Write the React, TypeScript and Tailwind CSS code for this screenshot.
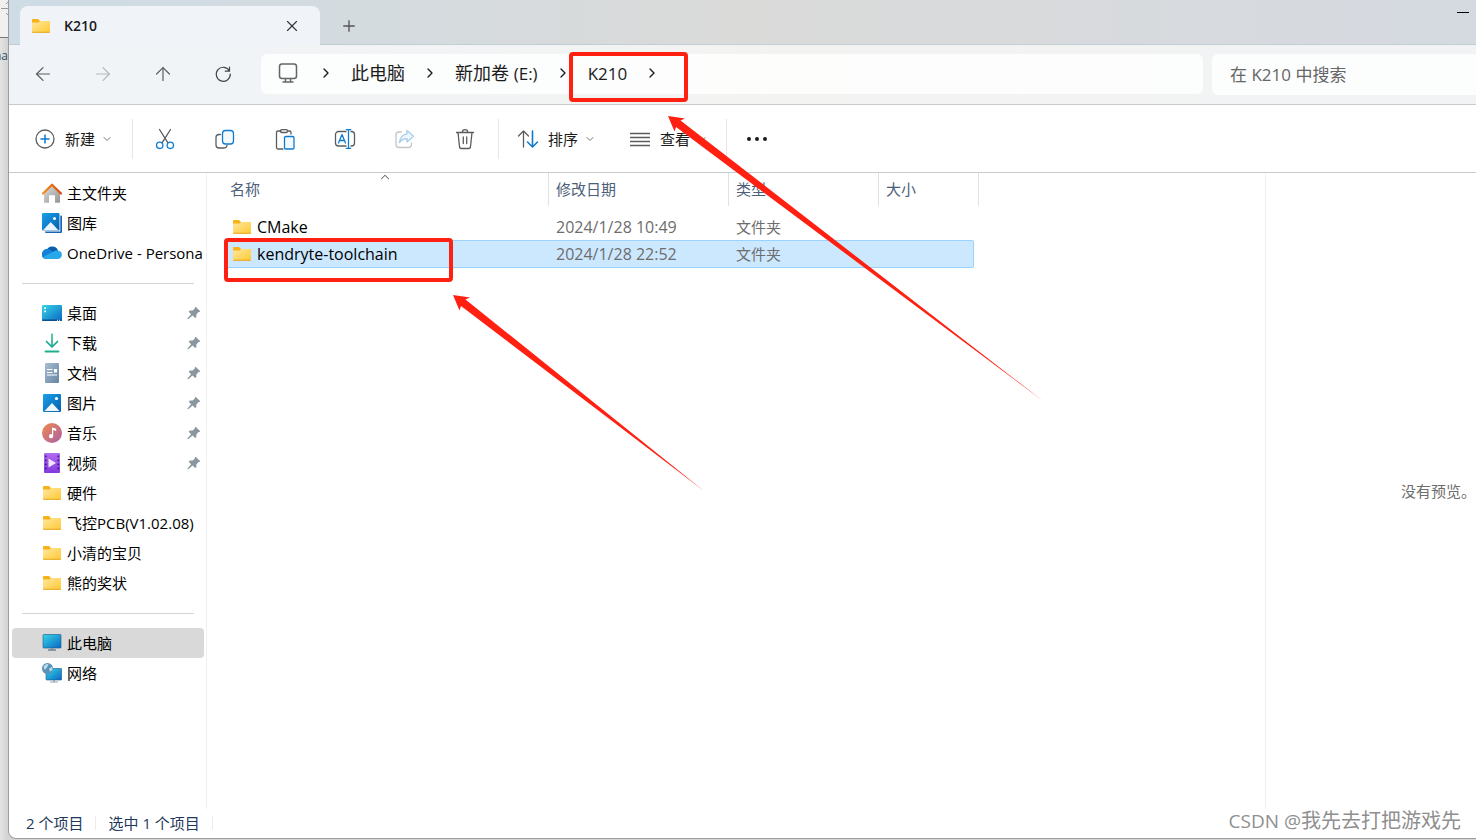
import type { ReactNode } from "react";
import { ArrowLeft, ArrowRight, ArrowUp, ChevronDown, ChevronRight, ChevronUp, Plus, X } from "lucide-react";

const FolderIcon = () => (
  <svg className="w-5 h-5 shrink-0" viewBox="0 0 20 20">
    <path d="M1 4a1 1 0 0 1 1-1h5l2 2v4H1z" fill="#f6b218" />
    <path d="M1 6.500h6.500L9 5h9.500a.5.500 0 0 1 .5.500V16a.7.700 0 0 1-.7.700H1.700A.7.700 0 0 1 1 16z" fill="url(#folder)" />
    <path d="M1 15.800h18V16a.8.800 0 0 1-.8.800H1.800A.8.800 0 0 1 1 16z" fill="#e8a51c" />
  </svg>
);

// gradients shared by every icon on the page
const Gradients = () => (
  <svg className="absolute w-0 h-0" aria-hidden="true">
    <defs>
      <linearGradient id="folder" x1="0" y1="0" x2="1" y2="1">
        <stop offset="0" stopColor="#ffe7a0" />
        <stop offset="1" stopColor="#ffc931" />
      </linearGradient>
      <linearGradient id="blue" x1="0" y1="0" x2="1" y2="1">
        <stop offset="0" stopColor="#1ba0ea" />
        <stop offset="1" stopColor="#0560ae" />
      </linearGradient>
      <linearGradient id="screen" x1="0" y1="0" x2="1" y2="1">
        <stop offset="0" stopColor="#35d6e6" />
        <stop offset="1" stopColor="#0b67c4" />
      </linearGradient>
      <linearGradient id="roof" x1="0" y1="0" x2="1" y2="0">
        <stop offset="0" stopColor="#f5901a" />
        <stop offset="1" stopColor="#d8460c" />
      </linearGradient>
      <linearGradient id="wall" x1="0" y1="0" x2="1" y2="1">
        <stop offset="0" stopColor="#dedede" />
        <stop offset="1" stopColor="#949494" />
      </linearGradient>
      <linearGradient id="green" x1="0" y1="0" x2="0" y2="1">
        <stop offset="0" stopColor="#35c482" />
        <stop offset="1" stopColor="#0fa197" />
      </linearGradient>
      <linearGradient id="doc" x1="0" y1="0" x2="1" y2="1">
        <stop offset="0" stopColor="#a9bed2" />
        <stop offset="1" stopColor="#6684a3" />
      </linearGradient>
      <linearGradient id="music" x1="0" y1="0" x2="1" y2="1">
        <stop offset="0" stopColor="#f08a4b" />
        <stop offset="1" stopColor="#a95fa8" />
      </linearGradient>
      <linearGradient id="video" x1="0" y1="0" x2="0" y2="1">
        <stop offset="0" stopColor="#b06cf0" />
        <stop offset="1" stopColor="#8238dc" />
      </linearGradient>
    </defs>
  </svg>
);

const SideSvg = ({ children }: { children: ReactNode }) => (
  <svg className="w-5 h-5 shrink-0" viewBox="0 0 20 20" fill="none">
    {children}
  </svg>
);

const HomeIcon = () => (
  <SideSvg>
    <path d="M2 9l8-7 8 7v10a.8.800 0 0 1-.8.800H13v-7.500H7v7.500H2.800A.8.800 0 0 1 2 19z" fill="url(#wall)" />
    <path d="M1 10.500L10 1.700l9 8.800" stroke="url(#roof)" strokeWidth="2.200" strokeLinecap="round" strokeLinejoin="round" />
  </SideSvg>
);

const GalleryIcon = () => (
  <SideSvg>
    <path d="M18.300 2.500h.7a1 1 0 0 1 1 1V19a1 1 0 0 1-1 1H4a1 1 0 0 1-1-1v-.500h15.300z" fill="#1763b5" />
    <rect width="17.500" height="17.500" rx="1" fill="url(#blue)" />
    <path d="M1 17.300l7.700-8.300 7.700 8.300z" fill="#eaf5fd" />
    <circle cx="12.500" cy="5.500" r="1.500" fill="#fff" />
  </SideSvg>
);

const OneDriveIcon = () => (
  <SideSvg>
    <path d="M4.500 8a6 6 0 0 1 11.500-.500L12 13z" fill="#0a5cae" />
    <path d="M4.500 16A4.500 4.500 0 0 1 .500 8.800 5 5 0 0 1 8 6.800l5 3.700L10 16z" fill="#1481d6" />
    <path d="M14.500 7.400a5 5 0 0 1 2 .300 4.200 4.200 0 0 1-.500 8.300H4.500a4.600 4.600 0 0 1-3.700-1.800L12 8.200a5 5 0 0 1 2.500-.800z" fill="#28a8ea" />
  </SideSvg>
);

const DesktopIcon = () => (
  <SideSvg>
    <rect y="2" width="20" height="16" rx="1" fill="url(#screen)" />
    <path d="M0 16.500h20v.500a1 1 0 0 1-1 1H1a1 1 0 0 1-1-1z" fill="#0a4f8e" />
    <path d="M2.300 4.300h1.700V6H2.300zM2.300 7.600h1.700v1.700H2.300zM15 16.800h1v1h-1zM17 16.800h1v1h-1z" fill="#fff" />
  </SideSvg>
);

const DownloadIcon = () => (
  <SideSvg>
    <path d="M9.200.500h1.600V13H9.200z" fill="url(#green)" />
    <path d="M4.500 8.500L10 14l5.500-5.500" stroke="#17a98f" strokeWidth="1.700" strokeLinecap="round" strokeLinejoin="round" />
    <path d="M3.500 18.500h13" stroke="#1fae8b" strokeWidth="1.800" strokeLinecap="round" />
  </SideSvg>
);

const DocumentIcon = () => (
  <SideSvg>
    <rect x="3" width="14" height="20" rx="1" fill="url(#doc)" />
    <path d="M5 6.500h5.500M5 9.500h5.500M5 12h10" stroke="#fff" strokeWidth="1.200" />
    <path d="M12 6h3v3.500h-3z" fill="#fff" />
  </SideSvg>
);

const PictureIcon = () => (
  <SideSvg>
    <rect x="1" y="1" width="18" height="18" rx="1" fill="url(#blue)" />
    <path d="M2.500 18l7.500-8 7.500 8z" fill="#eef7fd" />
    <circle cx="14.500" cy="5.500" r="1.600" fill="#fff" />
  </SideSvg>
);

const MusicIcon = () => (
  <SideSvg>
    <circle cx="10" cy="10" r="10" fill="url(#music)" />
    <path d="M10 4.500l4.200 1.200v2.200L11.200 7v6.200a2.100 2.100 0 1 1-1.200-1.900z" fill="#fff" />
  </SideSvg>
);

const VideoIcon = () => (
  <SideSvg>
    <rect x="2" width="16" height="20" rx="1" fill="url(#video)" />
    <path d="M6.500 5.500L14 10l-7.500 4.500z" fill="#f1e6fd" />
    <path d="M3.800 2.500v16M16.200 2.500v16" stroke="#3c1474" strokeWidth="1.500" strokeDasharray="1.800 2.200" />
  </SideSvg>
);

const ComputerIcon = () => (
  <SideSvg>
    <rect x="1" y="1.500" width="18" height="13.500" rx=".7" fill="url(#screen)" stroke="#17588f" strokeWidth=".6" />
    <path d="M8.500 15h3v1.500h-3z" fill="#8b98a3" />
    <path d="M6 17h8" stroke="#4b5a66" strokeWidth="1.200" />
  </SideSvg>
);

const NetworkIcon = () => (
  <SideSvg>
    <rect x="4" y="5.500" width="15.700" height="11.500" rx=".7" fill="url(#screen)" stroke="#17588f" strokeWidth=".6" />
    <circle cx="5.500" cy="5.500" r="5.500" fill="#5b93b8" />
    <path d="M1.500 3.500C3.500 1 5.500.700 6.500 1.200L5 4.500 2.500 7zM7 5.500l3-1.500.500 3L8 8.500z" fill="#b9dcea" />
    <path d="M11 17h2v1.500h-2zM8 18.500h8v1H8z" fill="#9aa6af" />
  </SideSvg>
);

const PinIcon = () => (
  <svg className="w-[14px] h-[14px] shrink-0" viewBox="0 0 14 14" fill="#8a979f">
    <path d="M8.600.7l4.700 4.500-.900.900-.800-.100-2.300 2.600.100 2.300-1.200 1.100-2.700-2.600L1.200 13.200.400 13l.200-.800 3.500-4L1.700 5.700l1.200-1.100 2.800-.200L8 2.300l-.200-.800z" />
  </svg>
);

const quickItems = [
  { label: "桌面", icon: <DesktopIcon />, pinned: true },
  { label: "下载", icon: <DownloadIcon />, pinned: true },
  { label: "文档", icon: <DocumentIcon />, pinned: true },
  { label: "图片", icon: <PictureIcon />, pinned: true },
  { label: "音乐", icon: <MusicIcon />, pinned: true },
  { label: "视频", icon: <VideoIcon />, pinned: true },
  { label: "硬件", icon: <FolderIcon /> },
  { label: "飞控PCB(V1.02.08)", icon: <FolderIcon /> },
  { label: "小清的宝贝", icon: <FolderIcon /> },
  { label: "熊的奖状", icon: <FolderIcon /> },
];

const files = [
  { name: "CMake", date: "2024/1/28 10:49", type: "文件夹", selected: false },
  { name: "kendryte-toolchain", date: "2024/1/28 22:52", type: "文件夹", selected: true },
];

type SideItemProps = { label: string; icon: ReactNode; pinned?: boolean; active?: boolean };

const SideItem = ({ label, icon, pinned, active }: SideItemProps) => (
  <a
    href="#"
    className={`flex items-center h-[30px] pl-[30px] gap-[5px] rounded-sm overflow-hidden whitespace-nowrap text-black ${active ? "bg-[#d9d9d9]" : ""}`}
  >
    {icon}
    <span className="flex-1">{label}</span>
    {pinned && (
      <span className="pr-[3px]">
        <PinIcon />
      </span>
    )}
  </a>
);

const SideDivider = () => (
  <div className="h-[30px] flex items-center pl-[10px] pr-[10px]">
    <hr className="w-full border-[#d4d4d4]" />
  </div>
);

const ToolSvg = ({ children }: { children: ReactNode }) => (
  <svg className="w-6 h-6 shrink-0" viewBox="0 0 24 24" fill="none" stroke="#5c5c5c" strokeWidth="1.300" strokeLinecap="round" strokeLinejoin="round">
    {children}
  </svg>
);

const tools = [
  {
    label: "剪切",
    icon: (
      <ToolSvg>
        <path d="M6.500 2.500l8.300 13.200M17.500 2.500L9.200 15.700" />
        <circle cx="6.700" cy="18.300" r="3.200" stroke="#0f7bd0" />
        <circle cx="17.300" cy="18.300" r="3.200" stroke="#0f7bd0" />
      </ToolSvg>
    ),
  },
  {
    label: "复制",
    icon: (
      <ToolSvg>
        <path d="M7.500 7.500H6a3 3 0 0 0-3 3V18a3 3 0 0 0 3 3h5a3 3 0 0 0 3-2.500" />
        <rect x="9.500" y="3.500" width="11" height="13.500" rx="3" stroke="#0f7bd0" fill="#f3f9fd" />
      </ToolSvg>
    ),
  },
  {
    label: "粘贴",
    icon: (
      <ToolSvg>
        <path d="M8 4H5a1.500 1.500 0 0 0-1.500 1.500v15A1.500 1.500 0 0 0 5 22h5M14.500 4h2A1.500 1.500 0 0 1 18 5.500V7" />
        <rect x="7.500" y="2.700" width="7" height="2.800" rx="1.300" />
        <rect x="11.500" y="9.500" width="9.500" height="12.500" rx="1.300" stroke="#0f7bd0" fill="#f3f9fd" />
      </ToolSvg>
    ),
  },
  {
    label: "重命名",
    icon: (
      <ToolSvg>
        <path d="M13 4.500H5.500a3 3 0 0 0-3 3v8.500a3 3 0 0 0 3 3H13M18 4.500h.500a3 3 0 0 1 3 3v8.500a3 3 0 0 1-3 3H18" />
        <path d="M5.500 16L9 7.500l3.500 8.500M6.600 13.500h4.800M15.500 2.700v18.600M13.300 2.700h4.400M13.300 21.300h4.400" stroke="#0f7bd0" />
      </ToolSvg>
    ),
  },
  {
    label: "共享",
    disabled: true,
    icon: (
      <ToolSvg>
        <path d="M8.500 5H6a3 3 0 0 0-3 3v9.500a3 3 0 0 0 3 3h9.500a3 3 0 0 0 3-3V16" stroke="#c6c6c6" />
        <path d="M14 3.500l6.500 5.700-6.500 5.700v-3.200c-3-.200-5.200 1-7.500 3.800.500-4.800 3-8 7.500-8.700z" stroke="#a5cdec" fill="#f0f7fc" />
      </ToolSvg>
    ),
  },
  {
    label: "删除",
    icon: (
      <ToolSvg>
        <path d="M3.500 5.500h17M5 5.500l1.500 14a2 2 0 0 0 2 2h7a2 2 0 0 0 2-2L19 5.500M9.300 5.300a2.700 2.700 0 0 1 5.400 0M10.300 10v6.500M13.700 10v6.500" />
      </ToolSvg>
    ),
  },
];

const ToolSeparator = () => <div className="w-px h-10 bg-[#e6e6e6]" />;

const SmallChevron = () => <ChevronDown className="w-3 h-3 text-[#767676]" strokeWidth={2} />;

const Crumb = ({ children }: { children: ReactNode }) => (
  <button className="text-lg whitespace-nowrap text-[#1b1b1b]">{children}</button>
);

const CrumbChevron = () => <ChevronRight className="w-4 h-4 shrink-0 text-[#1b1b1b]" strokeWidth={2} />;

const App = () => {
  return (
    <div className="relative h-screen flex overflow-hidden bg-[#d5d5d5] text-[15px] leading-5 font-['Open_Sans','Noto_Sans_CJK_SC',sans-serif]">
      <Gradients />

      {/* window that lies behind */}
      <div className="w-2 shrink-0 overflow-hidden bg-gradient-to-r from-[#e4e4e4] to-[#d2d2d2]">
        <div className="h-[38px] border-b border-[#777] bg-[#f0f0f0]">
          <svg className="w-2 h-5" viewBox="0 0 8 20" stroke="#999" fill="none">
            <path d="M1 8.500h7M6 4l2-2M6 13l2 2" />
          </svg>
        </div>
        <div className="h-9 flex items-center justify-end text-xs text-[#3c4a5c]">na</div>
      </div>

      <div className="flex-1 min-w-0 flex flex-col mb-px bg-white border-l border-b border-[#9d9d9d] rounded-bl-lg overflow-hidden">
        {/* title bar */}
        <div className="h-[45px] shrink-0 flex border-b border-[#c3cdd4] bg-gradient-to-r from-[#cedce5] via-[#dadad9] to-[#d5dae1]">
          <div className="w-[300px] h-[39px] mt-[6px] ml-[11px] flex items-center rounded-t-lg bg-[#f0f4f8] pl-[11px] pr-[19px]">
            <FolderIcon />
            <span className="flex-1 ml-[13px] text-sm font-semibold text-[#1b1b1b]">K210</span>
            <button aria-label="关闭标签页">
              <X className="w-[18px] h-[18px] text-[#333]" strokeWidth={1.5} />
            </button>
          </div>
          <button aria-label="新标签页" className="ml-5 mt-2 self-center">
            <Plus className="w-[18px] h-[18px] text-[#555]" strokeWidth={1.8} />
          </button>
          <button aria-label="最小化" className="ml-auto mr-[7px] h-[25px] flex items-center">
            <span className="block w-3 h-px bg-black" />
          </button>
        </div>

        {/* navigation */}
        <div className="h-[60px] shrink-0 flex items-start pt-[9px] border-b border-[#c5cbcf] bg-gradient-to-r from-[#f0f4f8] via-[#f3f3f2] to-[#f2f3f5]">
          <div className="flex items-center h-10 pl-1">
            <button aria-label="后退" className="w-[60px] flex justify-center">
              <ArrowLeft className="w-[22px] h-[22px] text-[#5a5a5a]" strokeWidth={1.3} />
            </button>
            <button aria-label="前进" disabled className="w-[60px] flex justify-center">
              <ArrowRight className="w-[22px] h-[22px] text-[#b4b8bb]" strokeWidth={1.3} />
            </button>
            <button aria-label="向上" className="w-[60px] flex justify-center">
              <ArrowUp className="w-[22px] h-[22px] text-[#5a5a5a]" strokeWidth={1.3} />
            </button>
            <button aria-label="刷新" className="w-[60px] flex justify-center">
              <svg className="w-5 h-5" viewBox="0 0 20 20" fill="none" stroke="#444" strokeWidth="1.200" strokeLinecap="round" strokeLinejoin="round">
                <path d="M16.500 7A7 7 0 1 0 17.300 10M16.500 3v4.200h-4.200" />
              </svg>
            </button>
          </div>
          <nav aria-label="地址" className="flex-1 h-10 ml-2 flex items-center rounded-md bg-white/80 pl-4 pb-[2px]">
            <svg className="w-[22px] h-[22px] shrink-0" viewBox="0 0 22 22" fill="none" stroke="#666" strokeWidth="1.500">
              <rect x="2.500" y="2" width="17" height="14.500" rx="2.500" />
              <path d="M8.500 16.500v3M13.500 16.500v3M5.500 20h11" />
            </svg>
            <div className="flex items-center ml-[19px] gap-[17px]">
              <CrumbChevron />
              <Crumb>此电脑</Crumb>
              <CrumbChevron />
              <Crumb>
                新加卷 <span className="text-[17px]">(E:)</span>
              </Crumb>
              <CrumbChevron />
              <Crumb>
                <span className="text-[17px]">K210</span>
              </Crumb>
              <CrumbChevron />
            </div>
          </nav>
          <div className="w-[264px] h-[41px] ml-[9px] rounded-l-md bg-white/80 flex items-center pl-[18px]">
            <input
              aria-label="在 K210 中搜索"
              placeholder="在 K210 中搜索"
              className="w-full bg-transparent text-[17px] outline-none placeholder:text-[#666]"
            />
          </div>
        </div>

        {/* toolbar */}
        <div className="h-[68px] shrink-0 flex items-center border-b border-[#c5cbcf] text-[#1b1b1b]">
          <button className="w-[123px] flex items-center pl-6">
            <ToolSvg>
              <circle cx="12" cy="12" r="9" />
              <path d="M12 8v8M8 12h8" stroke="#0f7bd0" strokeWidth="1.500" />
            </ToolSvg>
            <span className="ml-2 mr-[6px]">新建</span>
            <SmallChevron />
          </button>
          <ToolSeparator />
          <div className="flex pl-[2px] pr-[3px]">
            {tools.map((tool) => (
              <button key={tool.label} aria-label={tool.label} disabled={tool.disabled} className="w-[60px] flex justify-center">
                {tool.icon}
              </button>
            ))}
          </div>
          <ToolSeparator />
          <button className="flex items-center ml-[17px]">
            <ToolSvg>
              <path d="M7.500 20V4M2.500 9l5-5 5 5" />
              <path d="M16.500 4v16M11.500 15l5 5 5-5" stroke="#0f7bd0" strokeWidth="1.600" />
            </ToolSvg>
            <span className="ml-2 mr-[6px]">排序</span>
            <SmallChevron />
          </button>
          <button className="flex items-center ml-8">
            <ToolSvg>
              <path d="M2 6.500h20M2 10.500h20M2 14.500h20M2 18.500h20" strokeLinecap="butt" />
            </ToolSvg>
            <span className="ml-2 mr-[6px]">查看</span>
            <SmallChevron />
          </button>
          <div className="ml-[18px]">
            <ToolSeparator />
          </div>
          <button aria-label="更多" className="ml-[18px]">
            <svg className="w-6 h-6" viewBox="0 0 24 24" fill="#1b1b1b">
              <circle cx="4" cy="12" r="2" />
              <circle cx="12" cy="12" r="2" />
              <circle cx="20" cy="12" r="2" />
            </svg>
          </button>
        </div>

        <div className="flex-1 min-h-0 flex">
          {/* sidebar */}
          <aside className="w-[198px] shrink-0 pt-[5px] pl-[3px] pr-[2px] border-r border-[#f0f0f0]">
            <SideItem label="主文件夹" icon={<HomeIcon />} />
            <SideItem label="图库" icon={<GalleryIcon />} />
            <SideItem label="OneDrive - Persona" icon={<OneDriveIcon />} />
            <SideDivider />
            {quickItems.map((item) => (
              <SideItem key={item.label} label={item.label} icon={item.icon} pinned={item.pinned} />
            ))}
            <SideDivider />
            <SideItem label="此电脑" icon={<ComputerIcon />} active />
            <SideItem label="网络" icon={<NetworkIcon />} />
          </aside>

          {/* file list */}
          <main className="flex-1 min-w-0 pl-[17px]">
            <table className="table-fixed w-[755px] border-collapse text-left">
              <thead className="text-[#4c607a]">
                <tr>
                  <th className="w-[325px] p-0 pb-[7px] font-normal">
                    <div className="relative h-[33px] flex items-center pl-[6px] pb-[2px] border-r border-[#e2e2e2]">
                      名称
                      <ChevronUp className="absolute left-[154px] -top-[3px] w-[14px] h-[14px] text-[#666]" strokeWidth={1.8} />
                    </div>
                  </th>
                  <th className="w-[180px] p-0 pb-[7px] font-normal">
                    <div className="h-[33px] flex items-center pl-[7px] pb-[2px] border-r border-[#e2e2e2]">修改日期</div>
                  </th>
                  <th className="w-[150px] p-0 pb-[7px] font-normal">
                    <div className="h-[33px] flex items-center pl-[7px] pb-[2px] border-r border-[#e2e2e2]">类型</div>
                  </th>
                  <th className="w-[100px] p-0 pb-[7px] font-normal">
                    <div className="h-[33px] flex items-center pl-[7px] pb-[2px] border-r border-[#e2e2e2]">大小</div>
                  </th>
                </tr>
              </thead>
              <tbody className="text-[#6d6d6d]">
                {files.map((file) => {
                  const tint = file.selected ? "h-7 border-[#99d1ff] bg-[#cce8ff]" : "h-[27px] border-transparent";
                  return (
                    <tr key={file.name} aria-selected={file.selected}>
                      <td className="p-0">
                        <div className={`flex items-center pl-2 gap-[5px] border-y text-base leading-5 text-black ${tint}`}>
                          <FolderIcon />
                          {file.name}
                        </div>
                      </td>
                      <td className="p-0">
                        <div className={`flex items-center pl-[7px] border-y text-base leading-5 ${tint}`}>{file.date}</div>
                      </td>
                      <td className="p-0">
                        <div className={`flex items-center pl-[7px] border-y ${tint}`}>{file.type}</div>
                      </td>
                      <td className="p-0">
                        <div className={`mr-[5px] border-y border-r rounded-r-xs ${tint}`} />
                      </td>
                    </tr>
                  );
                })}
              </tbody>
            </table>
          </main>

          {/* preview */}
          <section className="w-[211px] shrink-0 flex items-center justify-end border-l border-[#f0f0f0] text-[#6d6d6d]">
            没有预览。
          </section>
        </div>

        <footer className="h-[29px] shrink-0 flex items-center pl-[17px] pb-px text-[#1e395b]">
          <span>2 个项目</span>
          <div className="w-px h-[14px] mx-3 bg-[#ececec]" />
          <span>选中 1 个项目</span>
          <div className="w-px h-[14px] mx-3 bg-[#ececec]" />
        </footer>
      </div>

      {/* marks drawn over the window */}
      <svg className="absolute inset-0 w-[1476px] h-[840px] pointer-events-none" viewBox="0 0 1476 840" fill="none">
        <rect x="571" y="54" width="115" height="46" rx="2" stroke="#ff2012" strokeWidth="4" />
        <rect x="226" y="240" width="225" height="40" rx="2" stroke="#ff2012" strokeWidth="4" />
        <path d="M668 116L685 118.500L680.500 120.500L1043 401L676 127L674.500 131.500z" fill="#ff2012" />
        <path d="M453 295L470 297.500L465.500 299.500L704 491L461 306L459.500 310.500z" fill="#ff2012" />
      </svg>
      <div className="absolute right-[15px] bottom-[7px] text-xl leading-6 text-[#8f8f8f] [text-shadow:1px_1px_0_#fff]">
        <span className="text-[19px]">CSDN @</span>我先去打把游戏先
      </div>
    </div>
  );
};

export default App;
